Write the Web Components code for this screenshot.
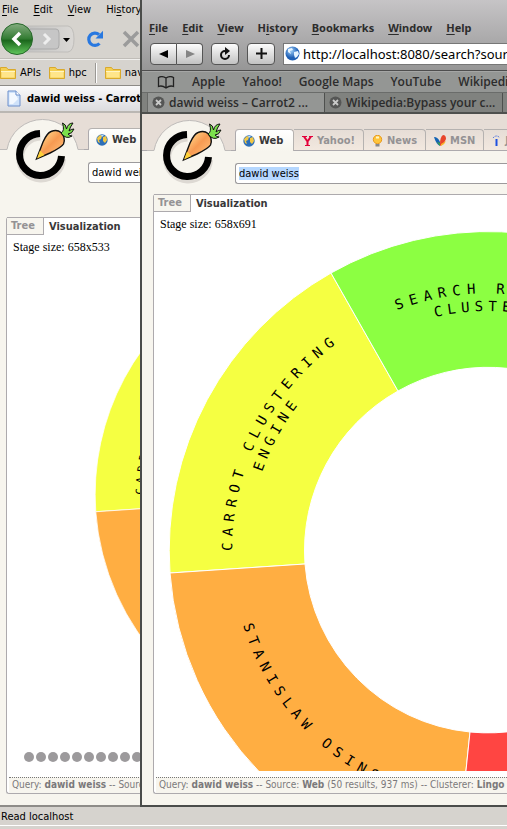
<!DOCTYPE html>
<html lang="en">
<head>
<meta charset="utf-8">
<title>dawid weiss - Carrot2</title>
<style>
html,body{height:100%;margin:0;overflow:hidden}
body{position:relative;background:#d6d3ce}
xp-browser{height:100%}
mac-browser{position:absolute;left:140px;right:0;top:0;bottom:22px}
</style>
</head>
<body>
<xp-browser>
  <carrot-page style="--pad:6px;--gap:34px" stage="658x533" height="533" pager></carrot-page>
</xp-browser>
<mac-browser>
  <carrot-page style="--pad:11px;--gap:10px" stage="658x691" height="691" selected></carrot-page>
</mac-browser>

<script>
const reset = `*{box-sizing:border-box}button{border:0;background:none;padding:0;margin:0;font:inherit;color:inherit;text-align:left;white-space:nowrap}a{color:inherit;text-decoration:none;white-space:nowrap}svg{display:block;flex:none}u{text-underline-offset:2px}`;

class Base extends HTMLElement {
  connectedCallback() {
    if (!this.shadowRoot) this.attachShadow({ mode: 'open' }).innerHTML = `<style>${reset}</style>` + this.view();
  }
}

customElements.define('xp-browser', class extends Base {
  view() {
    const folder = `<svg width="16" height="16" viewBox="0 0 16 16"><path d="M.5 13.500V2.500H6.500L8 4.500H15.500V13.500Z" fill="#f4cf52" stroke="#d9a92c"/><path d="M1.500 12.500V6.500H14.500V12.500Z" fill="#ffe58a"/><path d="M1 6.500H15" stroke="#fff5c4"/></svg>`;
    return `<style>
:host{display:flex;flex-direction:column;background:#d6d3ce;font:11px/14px "DejaVu Sans Condensed","Noto Sans",sans-serif;color:#000}
nav{display:flex;align-items:center;flex:none;overflow:hidden}
.menu{height:20px;gap:15px;padding-left:2px}
.tools{height:39px;gap:0;border-bottom:1px solid #c0bdb8}
.marks{height:26px;gap:8px;border-top:1px solid #efeeec}
.marks a{display:flex;align-items:center;gap:4px}
.marks i{width:2px;height:20px;background:linear-gradient(90deg,#9a9894 50%,#fff 50%)}
.tabs{height:28px;background:linear-gradient(#fafafa,#e3e3e6 75%,#dcdcde);border-top:1px solid #8c8a86;border-bottom:2px solid #bab7b3;padding-left:7px;gap:6px}
.tabs b{font:bold 11px/16px "DejaVu Sans Condensed",sans-serif;white-space:nowrap}
main{flex:1;min-height:0;display:flex}
::slotted(*){flex:1}
footer{height:24px;flex:none;border-top:2px solid #8e8c88;border-bottom:3px solid #d6d3ce;box-shadow:inset 0 -1px #fff;padding:3px 1px;white-space:nowrap}
</style>
<nav class="menu"><button><u>F</u>ile</button><button><u>E</u>dit</button><button><u>V</u>iew</button><button>Hi<u>s</u>tory</button></nav>
<nav class="tools">
<button aria-label="Back and forward"><svg width="76" height="36" viewBox="0 0 76 36"><defs><linearGradient id="g" x1="0" y1="0" x2="0" y2="1"><stop offset="0" stop-color="#85ad80"/><stop offset=".48" stop-color="#347d34"/><stop offset=".55" stop-color="#1c681d"/><stop offset="1" stop-color="#62c85c"/></linearGradient><linearGradient id="h"><stop offset="0" stop-color="#bdbdbd"/><stop offset="1" stop-color="#dad8d5"/></linearGradient></defs><path d="M16 5H68Q74 6 74 18T68 31H16Z" fill="url(#h)" stroke="#bfbdba"/><path d="M30 8H56Q59 8 59 12V24Q59 28 56 28H30Z" fill="#c6c6c6" stroke="#aaa"/><circle cx="17" cy="18" r="15.500" fill="url(#g)" stroke="#26682a"/><path d="M20 12L14 18L20 24" fill="none" stroke="#fff" stroke-width="3.500"/><path d="M44 13L49 18L44 23" fill="none" stroke="#eee" stroke-width="3"/><path d="M63 17H70L66.500 21Z"/></svg></button>
<button aria-label="Reload" style="margin-left:10px"><svg width="18" height="18" viewBox="0 0 18 18"><path d="M13.500 13.500A6.200 6.200 0 1 1 13 4.500" fill="none" stroke="#2878e0" stroke-width="3.200"/><path d="M17 .8V8.500H9.500Z" fill="#2878e0"/></svg></button>
<button aria-label="Stop" style="margin-left:18px"><svg width="18" height="18" viewBox="0 0 18 18"><path d="M2 2L16 16M16 2L2 16" stroke="#9b9b9b" stroke-width="3.500"/></svg></button>
</nav>
<nav class="marks"><a href="#">${folder}APIs</a><a href="#">${folder}hpc</a><i></i><a href="#">${folder}nav</a></nav>
<nav class="tabs"><svg width="14" height="17" viewBox="0 0 14 17"><path d="M1 1H9L13 5V16H1Z" fill="#cfe2fa" stroke="#6d8fcb"/><path d="M2.500 3H8L11 9L6 14H2.500Z" fill="#f3f8ff"/><path d="M9 1V5H13" fill="#fff" stroke="#6d8fcb"/></svg><b>dawid weiss - Carrot2</b></nav>
<main><slot></slot></main>
<footer>Read localhost</footer>`;
  }
});

customElements.define('mac-browser', class extends Base {
  view() {
    const close = `<svg width="13" height="13" viewBox="0 0 13 13"><circle cx="6.500" cy="6.500" r="6" fill="#555655"/><path d="M4 4L9 9M9 4L4 9" stroke="#c9cac9" stroke-width="1.800"/></svg>`;
    return `<style>
:host{display:flex;flex-direction:column;border-left:2px solid #4a4c4a;border-bottom:2px solid #4a4c4a;font:bold 11px/14px "Noto Sans",sans-serif;color:#2c2c2c;background:#949694;overflow:hidden}
nav,.bar{display:flex;align-items:center;flex:none;overflow:hidden}
.top{background:linear-gradient(#c6c4c6,#969696);border-bottom:1px solid #4e4e4e;flex:none}
.menu{height:37px;padding:18px 0 0 7px;gap:14px}
.bar{height:33px;padding-left:8px}
.btn{height:22px;width:28px;flex:none;border:1px solid #555;border-radius:4px;background:linear-gradient(#fcfcfc,#c2c2c2);display:flex;align-items:center;justify-content:center}
.l{border-radius:4px 0 0 4px;width:27px}.r{border-radius:0 4px 4px 0;border-left-width:0;width:26px}
.url{flex:1;min-width:0;margin-left:8px;height:22px;background:#fff;border:1px solid #777;border-right:0;display:flex;align-items:center;gap:3px;padding-left:1px}
.url input{flex:1;min-width:0;border:0;padding:0;outline:0;background:none;font:13px/18px "Noto Sans",sans-serif;color:#000}
.marks{height:21px;gap:17px;padding-left:15px;border-top:1px solid #a5a6a5}
.marks,.tabs{font:600 12px/16px "Open Sans","Noto Sans",sans-serif}
.tabs{height:22px;background:#80827f;border-bottom:2px solid #4e504e;padding-left:5px;align-items:stretch;border-top:1px solid #6a6c6a}
.tabs button{display:flex;align-items:center;gap:4px;width:178px;flex:none;padding-left:4px;border-right:1px solid #4e504e}
.tabs .on{background:#949694;border-left:1px solid #686a68}
main{flex:1;min-height:0;display:flex}
::slotted(*){flex:1;min-width:0}
</style>
<div class="top"><nav class="menu"><button><u>F</u>ile</button><button><u>E</u>dit</button><button><u>V</u>iew</button><button>H<u>i</u>story</button><button><u>B</u>ookmarks</button><button><u>W</u>indow</button><button><u>H</u>elp</button></nav>
<div class="bar">
<button class="btn l" aria-label="Back"><svg width="10" height="10"><path d="M0 5L9 1V9Z"/></svg></button><button class="btn r" aria-label="Forward"><svg width="10" height="10"><path d="M10 5L1 1V9Z" fill="#858585"/></svg></button>
<button class="btn" style="margin-left:8px" aria-label="Reload"><svg width="14" height="14" viewBox="0 0 14 14"><path d="M8 4H7A4 4 0 1 0 11 8" fill="none" stroke="#111" stroke-width="2"/><path d="M7 0L12 4L7 8Z" fill="#111"/></svg></button>
<button class="btn" style="margin-left:8px" aria-label="Add bookmark"><svg width="11" height="11"><path d="M5.500 0V11M0 5.500H11" stroke="#111" stroke-width="2"/></svg></button>
<label class="url"><svg width="15" height="15" viewBox="0 0 15 15"><defs><radialGradient id="b" cx=".4" cy=".3"><stop offset="0" stop-color="#9ccdf8"/><stop offset="1" stop-color="#1f5fb4"/></radialGradient></defs><circle cx="7.500" cy="7.500" r="7" fill="url(#b)"/><path d="M3 3L7 2L8 4L5 5L6 8L3 6ZM9 6L13 5L14 8L12 11L10 12L9 9Z" fill="#e6f4ff"/></svg><input aria-label="Address" value="http://localhost:8080/search?source=web"></label>
</div></div>
<nav class="marks"><svg width="18" height="13" viewBox="0 0 18 13"><path d="M9 2Q5-.5 1.500 1.500V10.500Q5 9 9 12Q13 9 16.500 10.500V1.500Q13-.5 9 2V12" fill="none" stroke="#222" stroke-width="1.300"/></svg><a href="#">Apple</a><a href="#">Yahoo!</a><a href="#">Google Maps</a><a href="#">YouTube</a><a href="#">Wikipedia</a></nav>
<nav class="tabs"><button class="on">${close}dawid weiss – Carrot2 ...</button><button>${close}Wikipedia:Bypass your c...</button></nav>
<main><slot></slot></main>`;
  }
});

customElements.define('ring-chart', class extends Base {
  view() {
    return `<style>:host{display:block}svg{width:100%;height:100%}text{font:14px "DejaVu Sans Mono",monospace;letter-spacing:6px}.in{letter-spacing:5px}</style>
<svg viewBox="-319 -319 638 638"><defs>
<path id="a" d="M-256 1A256 256 0 0 1 256 -1"/>
<path id="b" d="M-226 -78A239 239 0 0 1 226 78"/>
<path id="c" d="M-91 -240A257 257 0 0 1 257 0"/>
<path id="d" d="M-53 -233A239 239 0 0 1 239 0"/>
<path id="e" d="M-245 75A256 256 0 0 0 256 0"/></defs>
<g stroke="#fff">
<path fill="#f5ff42" d="M-318 23A319 319 0 0 1 -157 -277L-90 -159A183 183 0 0 0 -183 14Z"/>
<path fill="#8cff42" d="M-157 -277A319 319 0 0 1 180 -263L103 -151A183 183 0 0 0 -90 -159Z"/>
<path fill="#ffae42" d="M-318 23A319 319 0 0 0 -32 317L-18 182A183 183 0 0 1 -183 14Z"/>
<path fill="#ff4542" d="M-32 317A319 319 0 0 0 270 170L155 97A183 183 0 0 1 -18 182Z"/></g>
<text><textPath href="#a">CARROT CLUSTERING</textPath></text>
<text class="in"><textPath href="#b">ENGINE</textPath></text>
<text><textPath href="#c">SEARCH RESULTS</textPath></text>
<text class="in"><textPath href="#d">CLUSTERING</textPath></text>
<text><textPath href="#e">STANISLAW OSINSKI</textPath></text>
</svg>`;
  }
});

customElements.define('carrot-page', class extends Base {
  view() {
    const h = +this.getAttribute('height'), d = Math.round(h * .923);
    const sel = this.hasAttribute('selected');
    const earth = `<svg width="12" height="12" viewBox="0 0 12 12"><circle cx="6" cy="6" r="5.700" fill="#2d6fb8"/><path d="M1 4L4 1L6 2L5 5L3 6L4 9L2 8ZM7 3L10 2L11 6L9 9L7 7Z" fill="#f2c744"/><path d="M5 1L8 1L6 3Z" fill="#bfe0f6"/></svg>`;
    return `<style>
:host{display:flex;flex-direction:column;background:#f7f5ee;padding-bottom:11px;font:bold 11px/14px "DejaVu Sans",sans-serif;overflow:hidden}
header{height:37px;flex:none;display:flex;position:relative;background:#e6ddd6;border-bottom:1px solid #adaaad;align-items:flex-end;padding-left:calc(var(--pad) + 82px)}
.logo{position:absolute;left:calc(var(--pad) - 6px);top:0}
.t{height:21px;flex:none;display:flex;align-items:center;gap:4px;padding:1px 8px 0;color:#949294;border:1px solid #b5b2b0;border-left:0;border-bottom:0;border-radius:0 4px 0 0;background:linear-gradient(#e6ddd6,#f2e8df);font:bold 11px/14px "DejaVu Sans Condensed",sans-serif}
.t.on{height:22px;margin-bottom:-1px;color:#393839;background:linear-gradient(#fff,#f7f5ee);border-left:1px solid #adaaad;border-radius:4px 4px 0 0;width:59px;padding:1px 0 0 7px}
.q{display:block;flex:none;height:21px;margin:12px 0 var(--gap) calc(var(--pad) + 82px);border:1px solid #9c9a9c;border-right:0;border-radius:3px 0 0 3px;padding:0 3px;outline:0;font:11px/16px "DejaVu Sans Condensed",sans-serif;color:#000;background:#fff}
.q.sel{background:linear-gradient(#b5d7ff,#b5d7ff) 3px 3px/60px 13px no-repeat #fff}
section{flex:1;min-height:0;display:flex;flex-direction:column;margin-left:var(--pad);border-left:1px solid #adaaad;border-bottom:1px solid #adaaad;border-radius:3px 0 0 3px;background:#fff}
.tabs{display:flex;height:18px;flex:none;border-top:1px solid #adaaad}
.tabs button{padding:0 0 0 5px;font:bold 11px/16px "DejaVu Sans Condensed",sans-serif;color:#393839;flex:1}
.tabs .off{flex:none;width:37px;padding-left:4px;color:#949294;background:#f7f5ee;border-right:1px solid #adaaad;border-bottom:1px solid #adaaad}
.view{flex:1;min-height:0;overflow:hidden;position:relative}
.stage{width:658px;height:${h}px;margin:-8px 0 0 5px;display:flex;align-items:center;justify-content:center;position:relative}
.stage p{position:absolute;left:1px;top:12px;margin:0;font:12px/16px "Liberation Serif",serif;color:#000;white-space:nowrap}
ring-chart{width:${d}px;height:${d}px}
.dots{position:absolute;left:12px;bottom:-2px;display:flex;gap:2px}
.dots i{width:10px;height:10px;border-radius:50%;background:#9c9a9c}
footer{flex:none;margin:6px 0 0 2px;height:16px;border-top:1px dotted #777;background:#f7f5ee;padding-left:3px;font:10px/14px "DejaVu Sans Condensed",sans-serif;color:#7b797b;white-space:nowrap;overflow:hidden}
</style>
<header>
<svg class="logo" width="84" height="72" viewBox="0 0 84 72"><defs><linearGradient id="k" x1=".2" y1=".2" x2=".8" y2=".8"><stop offset="0" stop-color="#ffd184"/><stop offset=".5" stop-color="#f79a52"/><stop offset="1" stop-color="#ffb870"/></linearGradient></defs>
<path d="M0 36.500H7A36 36 0 0 1 78 36.500H84V38H0Z" fill="#f7f5ee"/><path d="M0 36.500H7A36 36 0 0 1 78 36.500H84" fill="none" stroke="#bfbcba"/>
<path d="M40.500 21.500A21 21 0 1 0 62 44" transform="translate(0 2)" fill="none" stroke="#ddd9d3" stroke-width="8"/>
<path d="M40 20.500A21 21 0 1 0 61.500 43" fill="none" stroke="#000" stroke-width="7"/>
<path d="M36.500 46L43 29Q47 20 51 18.500Q57 16 61 19.500Q66 25 63.500 31Q62 34 50 40Z" fill="url(#k)" stroke="#111" stroke-width="1.400"/><path d="M37 45.500L40 37.500L44.500 42Z" fill="#ffd23a"/>
<path d="M61 20Q65 18 62.500 10Q66 11 66.500 16Q68 10 73 10Q70 14 69 18Q71 16 74 16Q72 21 68 21Q70 23 72 23Q66 27 61 20Z" fill="#7be04c" stroke="#111"/></svg>
<button class="t on">${earth}Web</button>
<button class="t"><svg width="11" height="12"><path d="M0 1.500H5M7 1.500H11M3 6V11H8" stroke="none" fill="none"/><path d="M2 1.500L5.500 6.500L9 1.500M5.500 6V11" stroke="#e4003a" stroke-width="2" fill="none"/><path d="M0 1.500H5M7 1.500H11M3 10.500H8" stroke="#e4003a"/></svg>Yahoo!</button>
<button class="t"><svg width="11" height="12" viewBox="0 0 11 12"><circle cx="5.500" cy="4.500" r="4.200" fill="#ffc53a" stroke="#e8991f"/><path d="M4 2.500H7" stroke="#fff6c8" stroke-width="2"/><path d="M3.500 9H7.500V11.500H3.500Z" fill="#888"/></svg>News</button>
<button class="t"><svg width="12" height="12" viewBox="0 0 12 12"><path d="M6 11Q2 9 0 2Q4 2 6 7Z" fill="#1464b4"/><path d="M3 7L6 8V11Z" fill="#44a340"/><path d="M6 9Q6 2 9 0Q12 0 12 4Q10 9 6 11Z" fill="#e8452b"/><path d="M7 9L12 6Q11 9 7 11Z" fill="#f8b32a"/></svg>MSN</button>
<button class="t"><svg width="9" height="12"><path d="M4.500 4V11" stroke="#1d50e0" stroke-width="2"/><path d="M1 3Q4.500-1 8 3" fill="none" stroke="#1d50e0" stroke-dasharray="1 1"/></svg>Jobs</button>
</header>
<input class="q ${sel ? 'sel' : ''}" aria-label="Search query" value="dawid weiss">
<section>
<div class="tabs"><button class="off">Tree</button><button>Visualization</button></div>
<div class="view"><div class="stage"><ring-chart></ring-chart><p>Stage size: ${this.getAttribute('stage')}</p>${this.hasAttribute('pager') ? '<div class="dots">' + '<i></i>'.repeat(50) + '</div>' : ''}</div></div>
<footer>Query: <b>dawid weiss</b> -- Source: <b>Web</b> (50 results, 937 ms) -- Clusterer: <b>Lingo</b></footer>
</section>`;
  }
});
</script>
</body>
</html>
